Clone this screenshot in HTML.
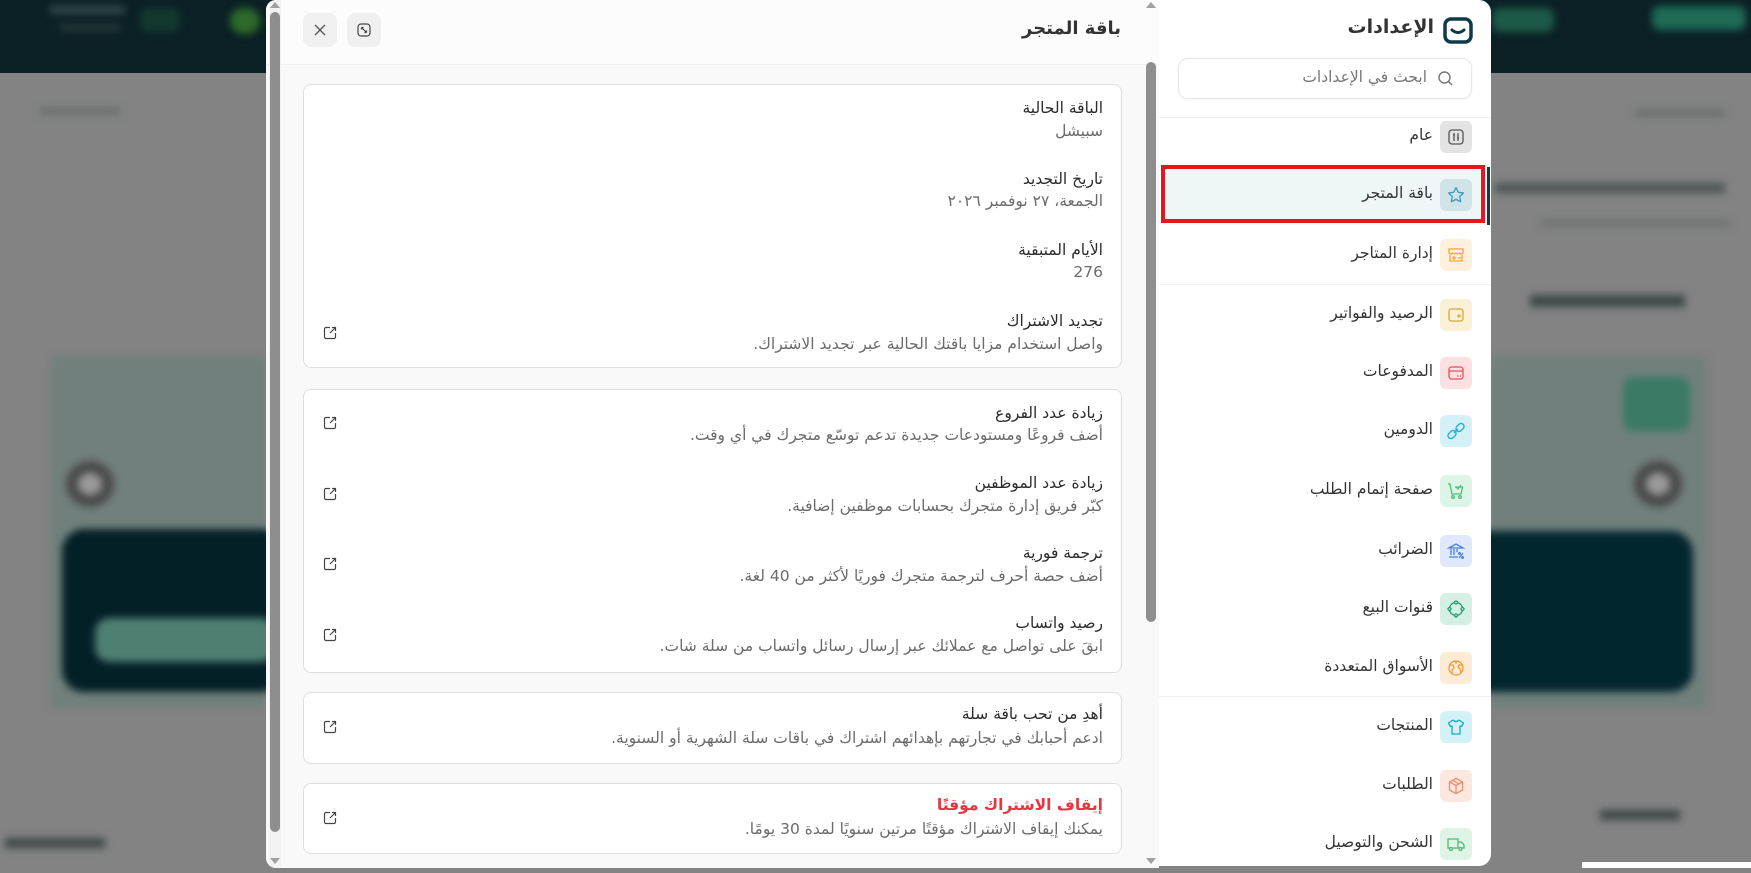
<!DOCTYPE html>
<html><head><meta charset="utf-8"><style>
*{box-sizing:border-box;margin:0;padding:0}
body{width:1751px;height:868px;overflow:hidden;background:#838383;font-family:"DejaVu Sans","Liberation Sans",sans-serif;position:relative}
.a{position:absolute}
.t{direction:rtl;text-align:right;white-space:nowrap}
.blur{filter:blur(4px)}
.card{position:absolute;left:303px;width:819px;background:#fff;border:1px solid #dedede;border-radius:8px}
.ti{position:absolute;right:18px;font-size:15.5px;color:#2b2b2b;direction:rtl;white-space:nowrap}
.su{position:absolute;right:18px;font-size:15.5px;color:#6b6b6b;direction:rtl;white-space:nowrap}
.ext{position:absolute;left:18px;width:16px;height:16px}
.it{position:absolute;left:1159px;width:332px;height:58px}
.ic{position:absolute;left:281px;top:13px;width:32px;height:32px;border-radius:6px;display:flex;align-items:center;justify-content:center}
.lb{position:absolute;right:58px;top:18px;font-size:15.5px;color:#333;direction:rtl;white-space:nowrap}
</style></head><body>
<!-- blurred background -->
<div class="a" style="left:0;top:0;width:1751px;height:73px;background:#0b2125"></div>
<div class="a blur" style="left:230px;top:8px;width:30px;height:26px;border-radius:13px;background:#2d6a2a"></div>
<div class="a blur" style="left:140px;top:8px;width:40px;height:24px;border-radius:8px;background:#12382f"></div>
<div class="a blur" style="left:50px;top:6px;width:75px;height:8px;background:#32484a"></div>
<div class="a blur" style="left:60px;top:24px;width:60px;height:7px;background:#26393b"></div>
<div class="a blur" style="left:1492px;top:8px;width:62px;height:24px;border-radius:8px;background:#1d5a48"></div>
<div class="a blur" style="left:1652px;top:6px;width:94px;height:24px;border-radius:8px;background:#1e6a55"></div>
<div class="a blur" style="left:40px;top:107px;width:80px;height:8px;background:#6c7070"></div>
<div class="a blur" style="left:1635px;top:109px;width:90px;height:8px;background:#6c7070"></div>
<div class="a blur" style="left:1495px;top:183px;width:230px;height:10px;background:#4d5555"></div>
<div class="a blur" style="left:1540px;top:220px;width:190px;height:7px;background:#707272"></div>
<div class="a blur" style="left:1530px;top:295px;width:155px;height:12px;background:#3d4747"></div>
<div class="a blur" style="left:50px;top:356px;width:216px;height:353px;background:#71807c;border-radius:6px"></div>
<div class="a blur" style="left:1491px;top:356px;width:216px;height:353px;background:#71807c;border-radius:6px"></div>
<div class="a blur" style="left:62px;top:529px;width:220px;height:163px;border-radius:22px;background:#032027"></div>
<div class="a blur" style="left:1470px;top:531px;width:223px;height:161px;border-radius:22px;background:#02262e"></div>
<div class="a blur" style="left:95px;top:618px;width:180px;height:44px;border-radius:14px;background:#4f7f72"></div>
<div class="a blur" style="left:1623px;top:377px;width:67px;height:54px;border-radius:10px;background:#3b7a65"></div>
<div class="a blur" style="left:66px;top:461px;width:48px;height:46px;border-radius:50%;border:12px solid #4a4a4a;background:#9a9a9a"></div>
<div class="a blur" style="left:1634px;top:461px;width:48px;height:46px;border-radius:50%;border:12px solid #4a4a4a;background:#9a9a9a"></div>
<div class="a blur" style="left:5px;top:838px;width:100px;height:10px;background:#3e4848"></div>
<div class="a blur" style="left:1600px;top:810px;width:80px;height:10px;background:#3e4646"></div>
<div class="a" style="left:1582px;top:862px;width:169px;height:6px;background:#fff"></div>

<!-- modal -->
<div class="a" style="left:266px;top:0;width:893px;height:868px;background:#f9f9f9;border-radius:10px 0 0 10px;overflow:hidden">
  <div class="a" style="left:0;top:0;width:893px;height:65px;background:#fcfcfc;border-bottom:1px solid #efefef"></div>
  <div class="a" style="left:3px;top:0;width:12px;height:868px;background:#f3f3f3"></div>
  <div class="a" style="left:4px;top:12px;width:10px;height:820px;border-radius:5px;background:#8e8e8e"></div>
  <div class="a" style="left:4px;top:2px;width:0;height:0;border-left:5px solid transparent;border-right:5px solid transparent;border-bottom:6px solid #a0a0a0"></div>
  <div class="a" style="left:4px;top:858px;width:0;height:0;border-left:5px solid transparent;border-right:5px solid transparent;border-top:6px solid #a0a0a0"></div>
  <div class="a" style="left:880px;top:62px;width:10px;height:560px;border-radius:5px;background:#8e8e8e"></div>
  <div class="a" style="left:880px;top:2px;width:0;height:0;border-left:5px solid transparent;border-right:5px solid transparent;border-bottom:6px solid #a0a0a0"></div>
  <div class="a" style="left:880px;top:858px;width:0;height:0;border-left:5px solid transparent;border-right:5px solid transparent;border-top:6px solid #a0a0a0"></div>
  <div class="a t" style="right:38px;top:18px;font-size:18px;font-weight:bold;color:#333">باقة المتجر</div>
  <div class="a" style="left:37px;top:13px;width:34px;height:34px;border-radius:8px;background:#f0f0f0;display:flex;align-items:center;justify-content:center">
    <svg width="14" height="14" viewBox="0 0 14 14"><path d="M2 2L12 12M12 2L2 12" stroke="#555" stroke-width="1.3"/></svg></div>
  <div class="a" style="left:81px;top:13px;width:34px;height:34px;border-radius:8px;background:#f0f0f0;display:flex;align-items:center;justify-content:center">
    <svg width="16" height="16" viewBox="0 0 16 16" fill="none" stroke="#444" stroke-width="1.2"><rect x="2" y="2" width="12" height="12" rx="3"/><path d="M5.5 5.5l5 5M5.5 5.5v2M5.5 5.5h2M10.5 10.5v-2M10.5 10.5h-2"/></svg></div>
</div>

<svg width="0" height="0" style="position:absolute"><defs><symbol id="ex" viewBox="0 0 16 16"><path d="M8 2.5H4A1.5 1.5 0 0 0 2.5 4v8A1.5 1.5 0 0 0 4 13.5h8A1.5 1.5 0 0 0 13.5 12V8M10 2.5h3.5V6M13.5 2.5L8 8" fill="none" stroke="#444" stroke-width="1.2"/></symbol></defs></svg>

<div class="card" style="top:84px;height:284px">
  <div class="ti" style="top:14px">الباقة الحالية</div><div class="su" style="top:37px">سبيشل</div>
  <div class="ti" style="top:85px">تاريخ التجديد</div><div class="su" style="top:107px">الجمعة، ٢٧ نوفمبر ٢٠٢٦</div>
  <div class="ti" style="top:156px">الأيام المتبقية</div><div class="su" style="top:178px">276</div>
  <div class="ti" style="top:227px">تجديد الاشتراك</div><div class="su" style="top:250px">واصل استخدام مزايا باقتك الحالية عبر تجديد الاشتراك.</div>
  <svg class="ext" style="top:240px"><use href="#ex"/></svg>
</div>
<div class="card" style="top:389px;height:284px">
  <div class="ti" style="top:14px">زيادة عدد الفروع</div><div class="su" style="top:36px">أضف فروعًا ومستودعات جديدة تدعم توسّع متجرك في أي وقت.</div>
  <svg class="ext" style="top:25px"><use href="#ex"/></svg>
  <div class="ti" style="top:84px">زيادة عدد الموظفين</div><div class="su" style="top:107px">كبّر فريق إدارة متجرك بحسابات موظفين إضافية.</div>
  <svg class="ext" style="top:96px"><use href="#ex"/></svg>
  <div class="ti" style="top:154px">ترجمة فورية</div><div class="su" style="top:177px">أضف حصة أحرف لترجمة متجرك فوريًا لأكثر من 40 لغة.</div>
  <svg class="ext" style="top:166px"><use href="#ex"/></svg>
  <div class="ti" style="top:224px">رصيد واتساب</div><div class="su" style="top:247px">ابقَ على تواصل مع عملائك عبر إرسال رسائل واتساب من سلة شات.</div>
  <svg class="ext" style="top:237px"><use href="#ex"/></svg>
</div>
<div class="card" style="top:692px;height:72px">
  <div class="ti" style="top:12px">أهدِ من تحب باقة سلة</div><div class="su" style="top:36px">ادعم أحبابك في تجارتهم بإهدائهم اشتراك في باقات سلة الشهرية أو السنوية.</div>
  <svg class="ext" style="top:26px"><use href="#ex"/></svg>
</div>
<div class="card" style="top:783px;height:71px">
  <div class="ti" style="top:12px;color:#e8343e;font-weight:bold">إيقاف الاشتراك مؤقتًا</div><div class="su" style="top:36px">يمكنك إيقاف الاشتراك مؤقتًا مرتين سنويًا لمدة 30 يومًا.</div>
  <svg class="ext" style="top:26px"><use href="#ex"/></svg>
</div>

<!-- sidebar -->
<div class="a" style="left:1159px;top:0;width:332px;height:866px;background:#fff;border-radius:0 12px 12px 0"></div>
<div class="a t" style="right:317px;top:16px;font-size:19px;font-weight:bold;color:#333">الإعدادات</div>
<svg class="a" style="left:1443px;top:17px" width="30" height="27" viewBox="0 0 30 27"><rect x="2" y="2" width="26" height="23" rx="6" fill="none" stroke="#0d3b48" stroke-width="3.5"/><path d="M9 13q6 5 12 0" fill="none" stroke="#0d3b48" stroke-width="3" stroke-linecap="round"/></svg>
<div class="a" style="left:1178px;top:58px;width:294px;height:41px;border:1px solid #e7e7e7;border-radius:10px;box-shadow:0 1px 3px rgba(0,0,0,.05)"></div>
<svg class="a" style="left:1437px;top:70px" width="17" height="17" viewBox="0 0 17 17"><circle cx="7.5" cy="7.5" r="5.5" fill="none" stroke="#777" stroke-width="1.4"/><path d="M11.5 11.5L15 15" stroke="#777" stroke-width="1.4"/></svg>
<div class="a t" style="right:324px;top:68px;font-size:15.5px;color:#777">ابحث في الإعدادات</div>
<div class="a" style="left:1159px;top:117px;width:332px;height:1px;background:#efefef"></div>
<div class="a" style="left:1159px;top:284px;width:332px;height:1px;background:#efefef"></div>
<div class="a" style="left:1159px;top:696px;width:332px;height:1px;background:#efefef"></div>
<div class="a" style="left:1161px;top:165px;width:324px;height:58px;background:#eff6f8;border:4px solid #e8141f"></div>
<div class="a" style="left:1487px;top:167px;width:3px;height:58px;background:#0d3b48"></div>

<div class="it" style="top:108px"><div class="ic" style="background:#e3e3e3"><svg width="18" height="18" viewBox="0 0 18 18" fill="none" stroke="#555" stroke-width="1.3"><rect x="2" y="2" width="14" height="14" rx="3"/><path d="M7 5v8M11 5v8M6 7h2M10 10h2"/></svg></div><div class="lb">عام</div></div>
<div class="it" style="top:166px"><div class="ic" style="background:#cfe3e9"><svg width="20" height="20" viewBox="0 0 20 20"><path d="M10 2.5l2.3 4.8 5.2.7-3.8 3.6.9 5.2L10 14.3l-4.6 2.5.9-5.2L2.5 8l5.2-.7z" fill="none" stroke="#3a9db8" stroke-width="1.3" stroke-linejoin="round"/></svg></div><div class="lb">باقة المتجر</div></div>
<div class="it" style="top:226px"><div class="ic" style="background:#fff0dd"><svg width="20" height="20" viewBox="0 0 20 20" fill="none" stroke="#f5a530" stroke-width="1.3"><path d="M3 4h14v4q-2 2-3.5 0-1.75 2-3.5 0-1.75 2-3.5 0Q5 10 3 8z"/><path d="M4 10v6h12v-6M6 13h4M8 11v4M12 13h3"/></svg></div><div class="lb">إدارة المتاجر</div></div>
<div class="it" style="top:286px"><div class="ic" style="background:#f9f0d6"><svg width="20" height="20" viewBox="0 0 20 20" fill="none" stroke="#d5a93a" stroke-width="1.3"><rect x="3" y="4" width="14" height="12" rx="2.5"/><path d="M13 4V3"/><circle cx="13" cy="11" r="1"/></svg></div><div class="lb">الرصيد والفواتير</div></div>
<div class="it" style="top:344px"><div class="ic" style="background:#fde0e2"><svg width="20" height="20" viewBox="0 0 20 20" fill="none" stroke="#e8505c" stroke-width="1.3"><rect x="3" y="4" width="14" height="12" rx="2.5"/><path d="M3 8h14M11 13h1.5M14 13h1"/></svg></div><div class="lb">المدفوعات</div></div>
<div class="it" style="top:402px"><div class="ic" style="background:#d4f1f7"><svg width="20" height="20" viewBox="0 0 20 20" fill="none" stroke="#28aed0" stroke-width="1.4"><rect x="3" y="9" width="6" height="9" rx="3" transform="rotate(45 6 13.5)"/><rect x="11" y="2" width="6" height="9" rx="3" transform="rotate(45 14 6.5)"/><path d="M8 12l4-4"/></svg></div><div class="lb">الدومين</div></div>
<div class="it" style="top:462px"><div class="ic" style="background:#ddf5e6"><svg width="20" height="20" viewBox="0 0 20 20" fill="none" stroke="#4cc07a" stroke-width="1.3"><path d="M2 3h2l2 10h9l1.5-7H9"/><path d="M10 6l2 2 3-4"/><circle cx="7" cy="16" r="1.3"/><circle cx="14" cy="16" r="1.3"/></svg></div><div class="lb">صفحة إتمام الطلب</div></div>
<div class="it" style="top:522px"><div class="ic" style="background:#dfe9fb"><svg width="20" height="20" viewBox="0 0 20 20" fill="none" stroke="#4d7ee0" stroke-width="1.3"><path d="M3 7l7-4 7 4z M3 16h9M5 8v6M8 8v6M11 8v3"/><path d="M13 17l4-5"/><circle cx="13.5" cy="12.5" r=".8"/><circle cx="16.5" cy="16.5" r=".8"/></svg></div><div class="lb">الضرائب</div></div>
<div class="it" style="top:580px"><div class="ic" style="background:#d3f0e3"><svg width="20" height="20" viewBox="0 0 20 20" fill="none" stroke="#1ea06e" stroke-width="1.3"><circle cx="10" cy="10" r="6.5"/><circle cx="10" cy="3.5" r="1.5" fill="#d3f0e3"/><circle cx="10" cy="16.5" r="1.5" fill="#d3f0e3"/><circle cx="3.5" cy="10" r="1.5" fill="#d3f0e3"/><circle cx="16.5" cy="10" r="1.5" fill="#d3f0e3"/></svg></div><div class="lb">قنوات البيع</div></div>
<div class="it" style="top:639px"><div class="ic" style="background:#fdebd6"><svg width="20" height="20" viewBox="0 0 20 20" fill="none" stroke="#f39a3a" stroke-width="1.3"><circle cx="10" cy="10" r="7"/><path d="M4 7h3l1 3-2 2v4M16 7h-3l-1 2 2 2 1 4M9 3l1 2 1-2"/></svg></div><div class="lb">الأسواق المتعددة</div></div>
<div class="it" style="top:698px"><div class="ic" style="background:#d4f1f7"><svg width="20" height="20" viewBox="0 0 20 20" fill="none" stroke="#17abc4" stroke-width="1.3" stroke-linejoin="round"><path d="M7 3L2.5 6l2 3.5L6 9v8h8V9l1.5.5 2-3.5L13 3q-3 3-6 0z"/></svg></div><div class="lb">المنتجات</div></div>
<div class="it" style="top:757px"><div class="ic" style="background:#fde7df"><svg width="20" height="20" viewBox="0 0 20 20" fill="none" stroke="#f28d6c" stroke-width="1.3" stroke-linejoin="round"><path d="M10 2.5l6.5 3.5v8L10 17.5 3.5 14V6z M3.5 6L10 9.5 16.5 6M10 9.5v8M6.5 4.3l6.5 3.5"/></svg></div><div class="lb">الطلبات</div></div>
<div class="it" style="top:815px"><div class="ic" style="background:#def4e5"><svg width="20" height="20" viewBox="0 0 20 20" fill="none" stroke="#4cbb7a" stroke-width="1.3"><path d="M2 5h10v9H2zM12 8h3.5L18 11v3h-6"/><circle cx="5" cy="15" r="1.5" fill="#def4e5"/><circle cx="14.5" cy="15" r="1.5" fill="#def4e5"/></svg></div><div class="lb">الشحن والتوصيل</div></div>
</body></html>
